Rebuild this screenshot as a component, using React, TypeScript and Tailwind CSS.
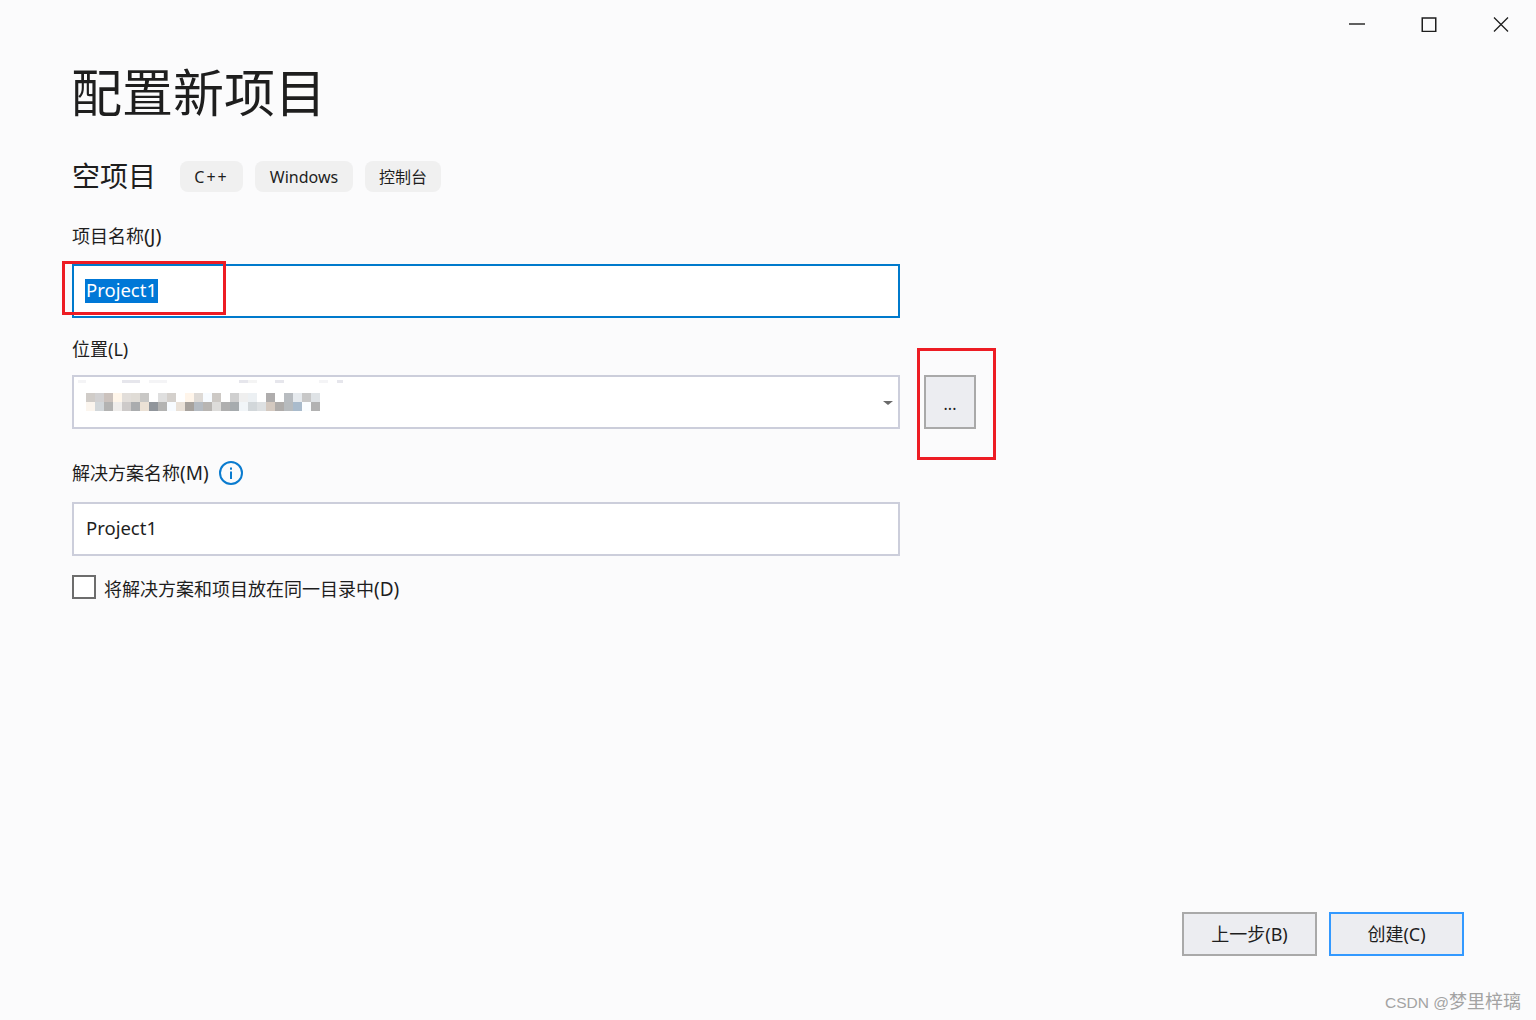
const FONT = "font-['Noto_Sans','Noto_Sans_CJK_SC',sans-serif]";

// blurred path in the location box: small strip on top, two rows of mosaic below
const strip = [
  { w: "w-[8px]", c: "bg-[#f4f4f6]" },
  { w: "w-[36px]", c: "" },
  { w: "w-[18px]", c: "bg-[#e6e6ec]" },
  { w: "w-[9px]", c: "" },
  { w: "w-[18px]", c: "bg-[#f4f4f6]" },
  { w: "w-[72px]", c: "" },
  { w: "w-[9px]", c: "bg-[#e6e6ec]" },
  { w: "w-[9px]", c: "bg-[#f4f4f4]" },
  { w: "w-[18px]", c: "" },
  { w: "w-[9px]", c: "bg-[#e6e6ec]" },
  { w: "w-[35px]", c: "" },
  { w: "w-[9px]", c: "bg-[#f4f4f6]" },
  { w: "w-[9px]", c: "" },
  { w: "w-[6px]", c: "bg-[#e6e6ec]" },
];

const mosaicTop = [
  "bg-[#d0ccc8]", "bg-[#d2d1d2]", "bg-[#cbc2bd]", "bg-[#fff6ea]", "bg-[#e2deda]", "bg-[#e0dcd6]", "bg-[#c8c7c5]", "bg-white", "bg-[#dfdfdf]",
  "bg-[#d4d0cc]", "bg-white", "bg-[#fff5ea]", "bg-[#dedad6]", "bg-[#f7fbff]", "bg-[#cdc9c5]", "bg-white", "bg-[#cfcfcf]", "bg-[#efefef]",
  "bg-[#ecf0f3]", "bg-white", "bg-[#afadad]", "bg-white", "bg-[#b8bcc0]", "bg-[#e6eaee]", "bg-[#c8c8c8]", "bg-[#dfe3e6]",
];

const mosaicBottom = [
  "bg-[#fbf5ee]", "bg-[#d2d7da]", "bg-[#b3b3b2]", "bg-[#efedeb]", "bg-[#cdcac9]", "bg-[#aaacae]", "bg-[#ebe1d5]", "bg-[#90959b]", "bg-[#b3b3b2]",
  "bg-[#f7fbff]", "bg-[#e9e1d8]", "bg-[#a7a29d]", "bg-[#b5bbc2]", "bg-[#b8b5b2]", "bg-[#dddcda]", "bg-[#afafaf]", "bg-[#a6abae]", "bg-[#f1f5f8]",
  "bg-[#d2d7da]", "bg-[#dde0e2]", "bg-[#d4c9c0]", "bg-[#afacaa]", "bg-[#b7bbbe]", "bg-[#a9bbcc]", "bg-[#fafdff]", "bg-[#b2b2b2]",
];

function Chip({ label, width, extra }: { label: string; width: string; extra?: string }) {
  return (
    <div className={`flex h-[31px] ${width} items-center justify-center rounded-lg bg-[#f0f0f0] text-base text-[#1e1e1e] ${extra ?? ""}`}>
      {label}
    </div>
  );
}

function Footer({ label, border }: { label: string; border: string }) {
  return (
    <button
      type="button"
      className={`flex h-11 w-[135px] items-center justify-center border-2 ${border} bg-[#ecedf1] text-lg text-[#1e1e1e]`}
    >
      {label}
    </button>
  );
}

export default function App() {
  return (
    <div className={`relative flex h-[1020px] w-[1536px] flex-col overflow-hidden bg-[#fbfbfc] text-[#1e1e1e] ${FONT}`}>
      {/* window buttons */}
      <div className="-mr-px flex h-12 shrink-0 justify-end">
        <div className="flex w-[72px] items-center justify-center">
          <svg width="16" height="16" viewBox="0 0 16 16" className="stroke-[#1e1e1e]">
            <path d="M0 8h16" strokeWidth="1.4" fill="none" />
          </svg>
        </div>
        <div className="flex w-[72px] items-center justify-center">
          <svg width="16" height="16" viewBox="0 0 16 16" className="stroke-[#1e1e1e]">
            <rect x="1.25" y="2" width="13.5" height="13.5" strokeWidth="1.5" fill="none" />
          </svg>
        </div>
        <div className="flex w-[72px] items-center justify-center">
          <svg width="16" height="16" viewBox="0 0 16 16" className="stroke-[#1e1e1e]">
            <path d="M1 1.5l14 14M15 1.5l-14 14" strokeWidth="1.3" fill="none" />
          </svg>
        </div>
      </div>

      <div className="flex flex-1 flex-col pl-[72px]">
        <h1 className="mt-[12px] -ml-px h-[64px] text-[51px] leading-[64px] font-normal">配置新项目</h1>

        <div className="mt-[37px] flex h-[31px] items-center">
          <div className="text-[28px] leading-[31px]">空项目</div>
          <div className="ml-[24px] flex gap-3">
            <Chip label="C++" width="w-[63px]" extra="tracking-[2px]" />
            <Chip label="Windows" width="w-[98px]" />
            <Chip label="控制台" width="w-[76px]" />
          </div>
        </div>

        <label className="mt-[30px] h-[28px] text-lg leading-[28px]">
          项目名称<span className="text-[20px]">(J)</span>
        </label>
        <div className="mt-[14px] flex h-[54px] w-[828px] items-center border-2 border-[#007acc] bg-white pl-[11px]">
          <span className="flex h-[24px] w-[73px] items-center bg-[#0078d7] pb-[2px] pl-px text-[18.5px] text-white">Project1</span>
        </div>

        <label className="mt-[17px] h-[28px] text-lg leading-[28px]">位置(L)</label>
        <div className="mt-[12px] flex items-start gap-6">
          <div className="relative h-[54px] w-[828px] border-2 border-[#ccceDB] bg-white">
            <div className="ml-[4px] mt-[3px] flex h-[3px]">
              {strip.map((s, i) => (
                <div key={i} className={`${s.w} ${s.c}`} />
              ))}
            </div>
            <div className="ml-[12px] mt-[10px] flex h-[9px]">
              {mosaicTop.map((c, i) => (
                <div key={i} className={`w-[9px] ${c}`} />
              ))}
            </div>
            <div className="ml-[12px] flex h-[9px]">
              {mosaicBottom.map((c, i) => (
                <div key={i} className={`w-[9px] ${c}`} />
              ))}
            </div>
            <div className="absolute top-[24px] right-[5px] h-0 w-0 border-x-[5px] border-t-[4px] border-x-transparent border-t-[#6a6a6a]" />
          </div>
          <button
            type="button"
            className="flex h-[54px] w-[52px] items-center justify-center border-2 border-[#a9a9a9] bg-[#ecedf1] pt-[4px] text-base leading-none text-[#1e1e1e]"
          >
            ...
          </button>
        </div>

        <div className="mt-[30px] flex h-[28px] items-center gap-[10px]">
          <label className="text-lg leading-[28px]">
            解决方案名称<span className="text-[19px]">(M)</span>
          </label>
          <svg width="24" height="24" viewBox="0 0 24 24" fill="none">
            <circle cx="12" cy="12" r="11" stroke="#0a7bcf" strokeWidth="2" />
            <rect x="11" y="6.5" width="2" height="2.2" fill="#0a7bcf" />
            <rect x="11" y="10.5" width="2" height="7.5" fill="#0a7bcf" />
          </svg>
        </div>
        <div className="mt-[15px] flex h-[54px] w-[828px] items-center border-2 border-[#ccceDB] bg-white pb-[2px] pl-[12px] text-[18.5px]">
          Project1
        </div>

        <div className="mt-[19px] flex h-[24px] items-center gap-[8px]">
          <div className="h-6 w-6 border-2 border-[#6d6d6d] bg-white" />
          <span className="mt-[4px] text-lg leading-[24px]">
            将解决方案和项目放在同一目录中<span className="text-[19px]">(D)</span>
          </span>
        </div>

        <div className="mt-auto mb-[64px] flex justify-end gap-3 pr-[72px]">
          <Footer label="上一步(B)" border="border-[#a9a9a9]" />
          <Footer label="创建(C)" border="border-[#3399ff]" />
        </div>
      </div>

      {/* red annotation boxes and the site watermark drawn over the screenshot */}
      <div className="absolute top-[261px] left-[62px] h-[54px] w-[164px] border-[3px] border-[#ed1c24]" />
      <div className="absolute top-[348px] left-[917px] h-[112px] w-[79px] border-[3px] border-[#ed1c24]" />
      <div className="absolute top-[990px] right-[15px] font-['Liberation_Sans','Noto_Sans_CJK_SC',sans-serif] text-[18px] leading-6 text-[#a3a3a3]">
        <span className="text-[15.5px]">CSDN @</span>梦里梓璃
      </div>
    </div>
  );
}
